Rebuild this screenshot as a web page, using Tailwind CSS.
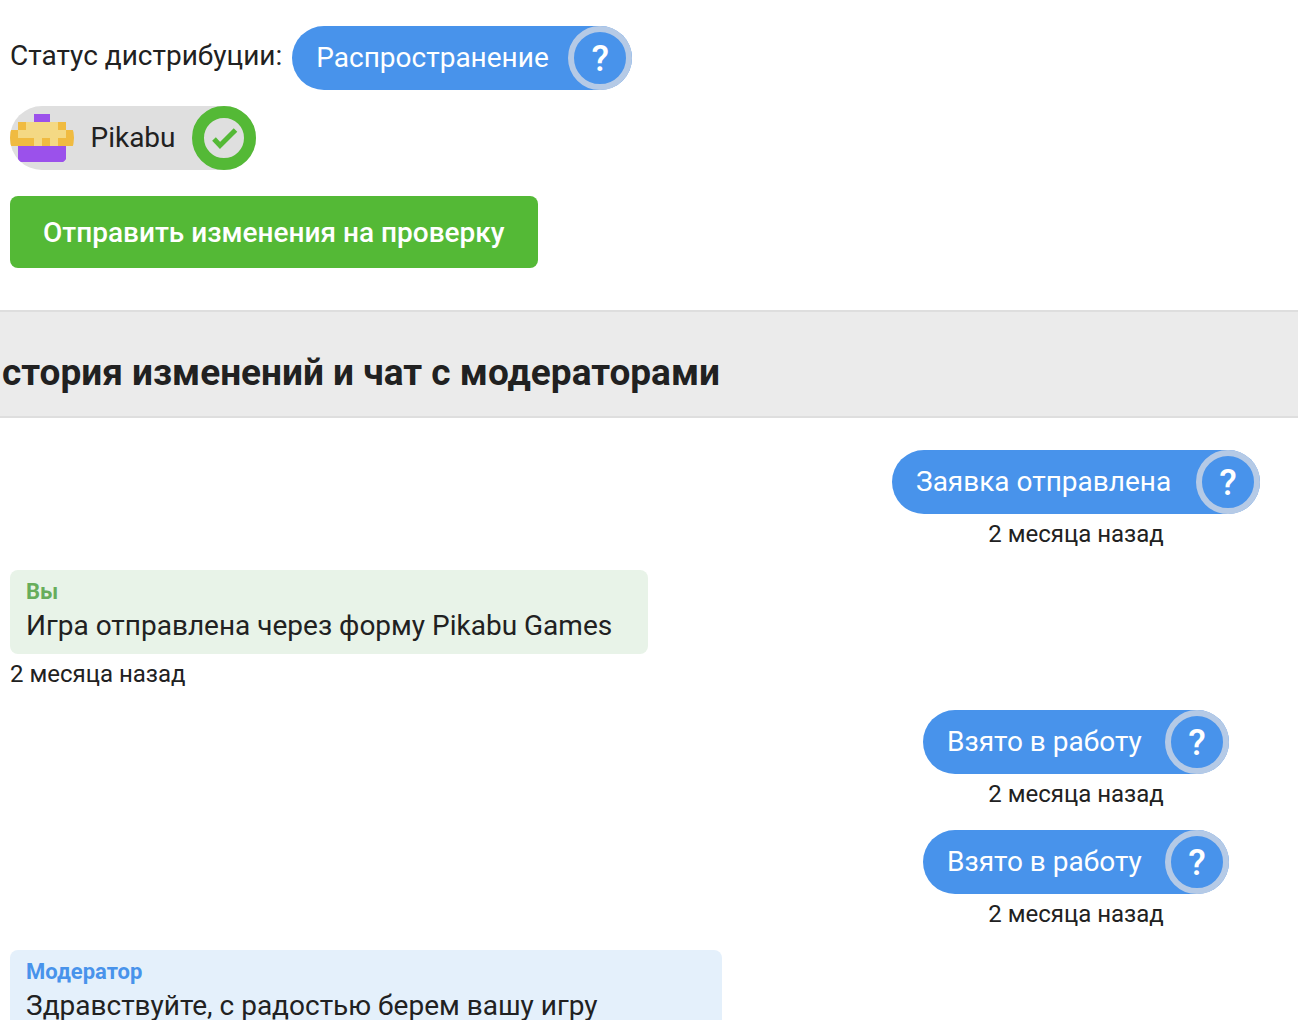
<!doctype html>
<html lang="ru">
  <head>
    <meta charset="UTF-8" />
    <meta name="viewport" content="width=device-width, initial-scale=1.0" />
    <script src="https://cdn.jsdelivr.net/npm/@tailwindcss/browser@4"></script>
    <title>Pikabu Games</title>
  </head>
  <body
    class="h-screen overflow-hidden bg-white font-[Roboto,sans-serif] text-[28px] leading-10 text-[#212121]"
  >
    <!-- Distribution status -->
    <section class="flex flex-col items-start px-[10px] pt-[26px] pb-[42px]">
      <div class="flex items-center gap-[10px]">
        <span class="pb-1">Статус дистрибуции:</span>
        <div
          class="flex h-16 min-w-[340px] items-center justify-between gap-4 rounded-full bg-[#4893eb] pl-6 text-white"
        >
          <span>Распространение</span>
          <button
            type="button"
            class="size-16 rounded-full border-6 border-[#b5cae6] pt-[2px] text-[36px] font-medium"
          >
            ?
          </button>
        </div>
      </div>

      <div
        class="mt-4 flex h-16 min-w-[246px] items-center justify-between gap-4 rounded-full bg-[#dfdfdf]"
      >
        <svg class="size-16 rounded-full" viewBox="0 0 64 64" shape-rendering="crispEdges">
          <path fill="#9b51eb" d="M24 8h16v8H24z" />
          <path fill="#f4d984" d="M8 16h48v24H8z" />
          <path
            fill="#f0bb41"
            d="M8 16h8v8H8zM48 16h8v8h-8zM0 24h8v8h16v8H0zM32 32h8v8h-8zM56 24h8v16H48v-8h8z"
          />
          <path fill="#9b51eb" d="M8 40h48v13q0 3-3 3H11q-3 0-3-3z" />
        </svg>
        <span>Pikabu</span>
        <svg class="size-16" viewBox="0 0 64 64" fill="none">
          <circle cx="32" cy="32" r="26" stroke="#54b936" stroke-width="12" />
          <path d="M22 33l6 6.500 15.500-15.500" stroke="#54b936" stroke-width="5" />
        </svg>
      </div>

      <button
        type="button"
        class="mt-[26px] h-[72px] rounded-lg bg-[#54b936] px-[33px] pt-[2px] font-medium text-white"
      >
        Отправить изменения на проверку
      </button>
    </section>

    <!-- History header -->
    <header class="border-y-2 border-[#dedede] bg-[#ebebeb] pt-[37px] pb-[19px]">
      <h2 class="px-[2px] text-[37px] leading-12 font-bold">
        стория изменений и чат с модераторами
      </h2>
    </header>

    <!-- Chat -->
    <main class="flex flex-col gap-4 pt-8 pr-[38px] pl-[10px]">
      <div class="flex w-[368px] flex-col items-center self-end">
        <div
          class="flex h-16 min-w-[368px] items-center justify-between gap-4 rounded-full bg-[#4893eb] pl-6 text-white"
        >
          <span>Заявка отправлена</span>
          <button
            type="button"
            class="size-16 rounded-full border-6 border-[#b5cae6] pt-[2px] text-[36px] font-medium"
          >
            ?
          </button>
        </div>
        <time class="text-2xl leading-10">2 месяца назад</time>
      </div>

      <div class="self-start">
        <article class="min-w-[638px] rounded-lg bg-[#e8f3e8] px-4 py-2">
          <h3 class="text-[22px] leading-7 font-bold text-[#67ad5b]">Вы</h3>
          <p>Игра отправлена через форму Pikabu Games</p>
        </article>
        <time class="block text-2xl leading-10">2 месяца назад</time>
      </div>

      <div class="flex w-[368px] flex-col items-center self-end">
        <div
          class="flex h-16 min-w-[306px] items-center justify-between gap-4 rounded-full bg-[#4893eb] pl-6 text-white"
        >
          <span>Взято в работу</span>
          <button
            type="button"
            class="size-16 rounded-full border-6 border-[#b5cae6] pt-[2px] text-[36px] font-medium"
          >
            ?
          </button>
        </div>
        <time class="text-2xl leading-10">2 месяца назад</time>
      </div>

      <div class="flex w-[368px] flex-col items-center self-end">
        <div
          class="flex h-16 min-w-[306px] items-center justify-between gap-4 rounded-full bg-[#4893eb] pl-6 text-white"
        >
          <span>Взято в работу</span>
          <button
            type="button"
            class="size-16 rounded-full border-6 border-[#b5cae6] pt-[2px] text-[36px] font-medium"
          >
            ?
          </button>
        </div>
        <time class="text-2xl leading-10">2 месяца назад</time>
      </div>

      <article class="w-full max-w-[712px] rounded-lg bg-[#e4f0fb] px-4 py-2">
        <h3 class="text-[22px] leading-7 font-bold text-[#4893eb]">Модератор</h3>
        <p>Здравствуйте, с радостью берем вашу игру</p>
      </article>
    </main>
  </body>
</html>
